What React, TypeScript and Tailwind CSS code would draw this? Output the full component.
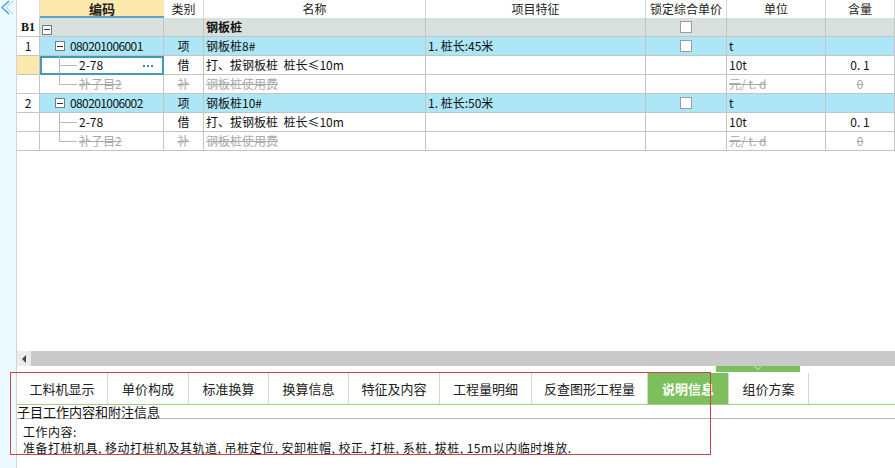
// @ts-nocheck
import React from 'react';

const COLS = 'grid-cols-[23px_124px_40px_222px_220px_81px_99px_69px]';
const FONT = { fontFamily: '"Noto Sans CJK SC", "Liberation Sans", sans-serif' };

const cell = 'border-r border-b border-[#c4c4c4] h-[19px] flex items-center text-[12px] leading-none overflow-hidden whitespace-nowrap';

function Box({ sign = true }) {
  return (
    <span className="inline-flex w-[10px] h-[10px] border border-[#7a7a7a] bg-white items-center justify-center shrink-0">
      {sign && <span className="w-[6px] h-px bg-[#333]" />}
    </span>
  );
}

function Check() {
  return <span className="w-[12px] h-[12px] border border-[#9c9c9c] bg-white" />;
}

function TreeLine({ last }) {
  return (
    <>
      <span className={`absolute left-[19px] top-0 w-px bg-[#b8b8b8] ${last ? 'h-[10px]' : 'h-full'}`} />
      <span className="absolute left-[19px] top-[9px] w-[18px] h-px bg-[#b8b8b8]" />
    </>
  );
}

function Row({ no, noBg = 'bg-white', bg = 'bg-white', code, type, name, feat = '', lock = false, unit = '', qty = '', kind }) {
  const strike = kind === 'sub2';
  const txt = strike ? 'text-[#a8a8a8] line-through' : 'text-[#111]';
  return (
    <>
      <div className={`${cell} ${noBg} justify-center text-[#111]`}>{no}</div>
      <div className={`${cell} ${bg} relative ${kind === 'sel' ? 'outline outline-2 -outline-offset-2 outline-[#3f9cb9]' : ''}`}>
        {kind === 'b1' && <span className="ml-[2px]"><Box /></span>}
        {kind === 'item' && (
          <span className="ml-[15px] flex items-center gap-[5px]"><Box /><span className="text-[#111] tracking-[-0.6px]">{code}</span></span>
        )}
        {(kind === 'sel' || kind === 'sub') && (
          <>
            <TreeLine />
            <span className="ml-[39px] text-[#111]">{code}</span>
            {kind === 'sel' && (
              <span className="absolute right-[10px] top-[9px] flex gap-[2px]">
                <span className="w-[2px] h-[2px] bg-[#3b7fb5]" />
                <span className="w-[2px] h-[2px] bg-[#3b7fb5]" />
                <span className="w-[2px] h-[2px] bg-[#3b7fb5]" />
              </span>
            )}
          </>
        )}
        {kind === 'sub2' && (
          <>
            <TreeLine last />
            <span className={`ml-[39px] ${txt}`}>{code}</span>
          </>
        )}
      </div>
      <div className={`${cell} ${bg} justify-center ${txt}`}>{type}</div>
      <div className={`${cell} ${bg} pl-[2px] whitespace-pre ${kind === 'b1' ? 'font-bold text-[#111]' : txt}`}>{name}</div>
      <div className={`${cell} ${bg} pl-[2px] text-[#111] whitespace-pre`}>{feat}</div>
      <div className={`${cell} ${bg} justify-center`}>{lock && <Check />}</div>
      <div className={`${cell} ${bg} pl-[2px] whitespace-pre ${txt}`}>{unit}</div>
      <div className={`${cell} ${bg} justify-center whitespace-pre ${strike ? 'text-[#a8a8a8] line-through' : 'text-[#111]'}`}>{qty}</div>
    </>
  );
}

const TABS = [
  ['工料机显示', 91],
  ['单价构成', 81],
  ['标准换算', 80],
  ['换算信息', 80],
  ['特征及内容', 91],
  ['工程量明细', 92],
  ['反查图形工程量', 116],
  ['说明信息', 81],
  ['组价方案', 80],
];

export default function App() {
  return (
    <div className="w-[895px] h-[468px] flex bg-white overflow-hidden relative" style={FONT}>
      <div className="w-[17px] shrink-0 bg-[#ecfbff] border-r border-[#d4d4d4] relative">
        <svg width="14" height="16" viewBox="0 0 14 16" className="absolute left-0 top-0">
          <path d="M9 1 L2 7.5 L9 14" fill="none" stroke="#4a8fd0" strokeWidth="1.2" />
          <path d="M13 1 L6 7.5 L13 14" fill="none" stroke="#9cc8ee" strokeWidth="1" />
        </svg>
      </div>

      <div className="flex-1 flex flex-col min-w-0">
        <div className={`grid ${COLS}`}>
          <div className="h-[18px] border-r border-[#e0e0e0]" />
          <div className="h-[18px] bg-[#fde8ad] border-b-2 border-[#5ba8c6] flex items-center justify-center text-[13px] leading-none font-bold text-[#222]">编码</div>
          {['类别', '名称', '项目特征', '锁定综合单价', '单位', '含量'].map((h) => (
            <div key={h} className="h-[18px] border-r border-[#d6d6d6] flex items-center justify-center text-[12px] leading-none text-[#222]">{h}</div>
          ))}

          <Row no={<span className="font-bold" style={{ fontFamily: '"Liberation Serif", serif' }}>B1</span>} noBg="bg-white" bg="bg-[#d9e1de]" kind="b1" name="钢板桩" lock />
          <Row no="1" bg="bg-[#ade6f7]" kind="item" code="080201006001" type="项" name="钢板桩8#" feat="1. 桩长:45米" lock unit="t" />
          <Row no="" noBg="bg-[#fde8ad]" kind="sel" code="2-78" type="借" name="打、拔钢板桩  桩长≤10m" unit="10t" qty="0. 1" />
          <Row no="" kind="sub2" code="补子目2" type="补" name="钢板桩使用费" unit="元/ t. d" qty="0" />
          <Row no="2" bg="bg-[#ade6f7]" kind="item" code="080201006002" type="项" name="钢板桩10#" feat="1. 桩长:50米" lock unit="t" />
          <Row no="" kind="sub" code="2-78" type="借" name="打、拔钢板桩  桩长≤10m" unit="10t" qty="0. 1" />
          <Row no="" kind="sub2" code="补子目2" type="补" name="钢板桩使用费" unit="元/ t. d" qty="0" />
        </div>

        <div className="flex-1" />

        <div className="h-[15px] bg-[#c9c9c9] flex items-center">
          <div className="w-[14px] h-[15px] bg-[#ececec] flex items-center justify-center">
            <span className="w-0 h-0 border-y-[4px] border-y-transparent border-r-[4px] border-r-[#444]" />
          </div>
        </div>
        <div className="h-[7px] flex">
          <div className="ml-[699px] w-[84px] h-[6px] bg-[#7dbf5f] flex justify-center">
            <svg width="8" height="5" viewBox="0 0 8 5"><path d="M1 0.5 L4 3.5 L7 0.5" fill="none" stroke="#d8f0cc" strokeWidth="1" /></svg>
          </div>
        </div>

        <div className="h-[32px] flex border-b border-[#9ccf86]">
          {TABS.map(([t, w], i) => (
            <div
              key={t}
              style={{ width: w }}
              className={`h-full flex items-center justify-center text-[13px] leading-none border-r border-[#cfe0c4] ${i === 7 ? 'bg-[#7cbf5c] text-white font-bold' : 'text-[#222]'}`}
            >
              {t}
            </div>
          ))}
        </div>

        <div className="h-[14px] flex items-center text-[13px] text-[#111] border-b border-[#b4b4b4] leading-none">子目工作内容和附注信息</div>
        <div className="pl-[6px] pt-[5px] text-[12px] text-[#111] tracking-[0.5px] flex flex-col gap-[1px]">
          <div className="h-[15px] leading-[15px]">工作内容:</div>
          <div className="h-[15px] leading-[15px]">准备打桩机具, 移动打桩机及其轨道, 吊桩定位, 安卸桩帽, 校正, 打桩, 系桩, 拔桩, 15m以内临时堆放.</div>
        </div>
        <div className="h-[13px]" />
      </div>

      <div className="absolute left-[10px] top-[372px] w-[701px] h-[83px] border border-[#c8434d] pointer-events-none" />
    </div>
  );
}
